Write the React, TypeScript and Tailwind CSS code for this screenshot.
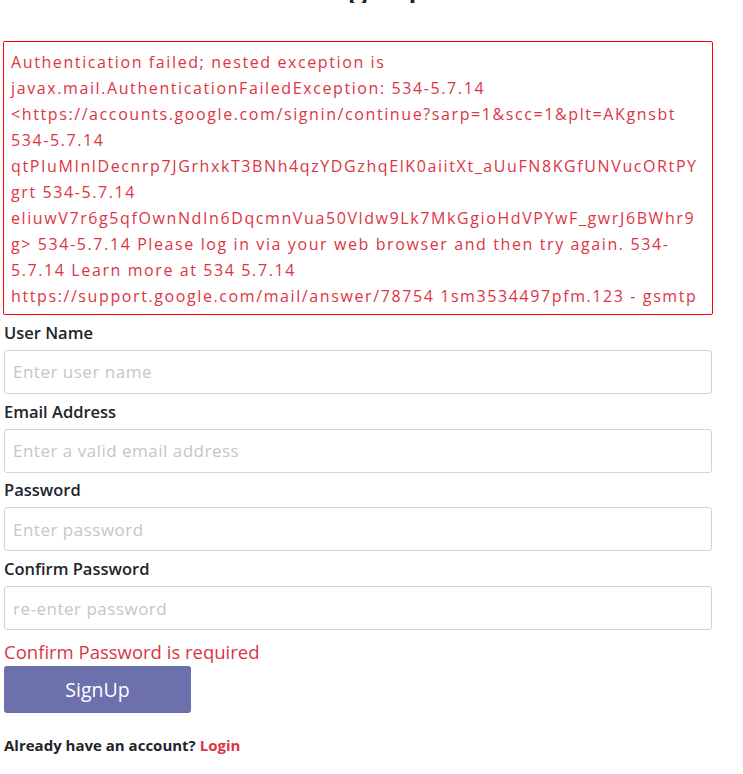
const errorLines = [
  "Authentication failed; nested exception is",
  "javax.mail.AuthenticationFailedException: 534-5.7.14",
  "<https://accounts.google.com/signin/continue?sarp=1&scc=1&plt=AKgnsbt",
  "534-5.7.14",
  "qtPIuMInlDecnrp7JGrhxkT3BNh4qzYDGzhqElK0aiitXt_aUuFN8KGfUNVucORtPY",
  "grt 534-5.7.14",
  "eliuwV7r6g5qfOwnNdIn6DqcmnVua50Vldw9Lk7MkGgioHdVPYwF_gwrJ6BWhr9",
  "g> 534-5.7.14 Please log in via your web browser and then try again. 534-",
  "5.7.14 Learn more at 534 5.7.14",
  "https://support.google.com/mail/answer/78754 1sm3534497pfm.123 - gsmtp",
]

const fields = [
  { label: "User Name", type: "text", placeholder: "Enter user name" },
  { label: "Email Address", type: "email", placeholder: "Enter a valid email address" },
  { label: "Password", type: "password", placeholder: "Enter password" },
  { label: "Confirm Password", type: "password", placeholder: "re-enter password" },
]

const Field = ({ label, type, placeholder }: { label: string; type: string; placeholder: string }) => (
  <div className="mt-[5.8px]">
    <label className="block text-[16.5px] leading-[24px] font-semibold text-[#212529] mb-[5px]">{label}</label>
    <input
      type={type}
      placeholder={placeholder}
      className="block w-full h-[44px] px-[8px] border border-[#d4d4d4] rounded-[3px] text-[17px] tracking-[0.5px] text-[#495057] placeholder:text-[#c6c6c6] outline-none"
    />
  </div>
)

export default function App() {
  return (
    <div className="bg-white min-h-[774px] font-['Open_Sans',sans-serif]">
      {/* heading is scrolled off, only its descender peeks in */}
      <div className="h-[3px] overflow-hidden">
        <h2 className="text-center text-[32px] leading-[40px] font-semibold text-[#212529] -mt-[34px] pl-[8px]">Signup</h2>
      </div>
      <div className="ml-[4px] w-[708px] pt-[38px]">
        <div className="-ml-[1px] w-[710px] border border-[#ff0000] rounded-[2px] pl-[7px] pt-[7px] pb-[5px] text-[#dc3545] text-[16px] tracking-[1.6px] leading-[26px]">
          {errorLines.map((l, i) => (
            <div key={i} className="whitespace-nowrap">{l}</div>
          ))}
        </div>

        {fields.map((f) => (
          <Field key={f.label} {...f} />
        ))}

        <div className="mt-[8px] text-[18.5px] leading-[28px] text-[#dc3545]">Confirm Password is required</div>
        <button className="w-[187px] h-[47px] rounded-[3px] bg-[#6c70ad] text-white text-[19.5px]">SignUp</button>

        <p className="mt-[21px] text-[15px] leading-[22px] font-bold text-[#212529]">
          Already have an account? <a className="text-[#dc3545]">Login</a>
        </p>
      </div>
    </div>
  )
}
